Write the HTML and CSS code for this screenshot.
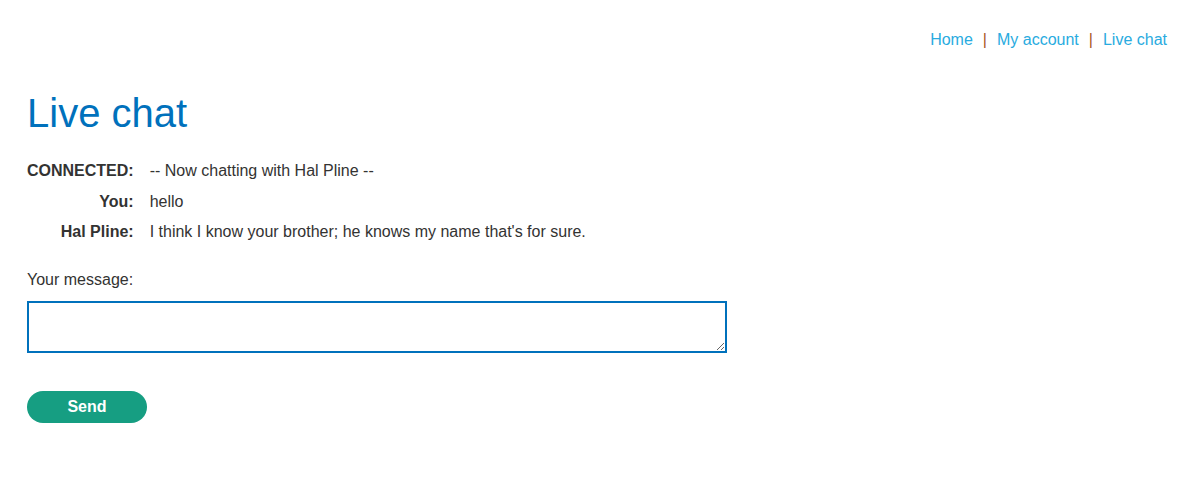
FILE: index.html
```html
<!DOCTYPE html>
<html>
<head>
<meta charset="utf-8">
<link rel="stylesheet" href="styles.css">
</head>
<body>
<div class="page">
  <header class="top-links">
    <a href="#">Home</a><span class="sep">|</span><a href="#">My account</a><span class="sep">|</span><a href="#">Live chat</a>
  </header>
  <h1 class="title">Live chat</h1>
  <table class="chat">
    <tr><th>CONNECTED:</th><td>-- Now chatting with Hal Pline --</td></tr>
    <tr><th>You:</th><td>hello</td></tr>
    <tr><th>Hal Pline:</th><td>I think I know your brother; he knows my name that's for sure.</td></tr>
  </table>
  <form class="chat-form">
    <label class="msg-label">Your message:</label>
    <textarea class="msg-input"></textarea>
    <button type="button" class="send">Send</button>
  </form>
</div>
</body>
</html>
```
FILE: styles.css
```css
html, body {
  margin: 0;
  padding: 0;
  background: #fff;
}
body {
  font-family: "Liberation Sans", Arial, sans-serif;
  font-size: 16px;
  color: #333332;
}
.page {
  padding: 30px 27px 0 27px;
}
.top-links {
  display: flex;
  justify-content: flex-end;
  align-items: center;
  line-height: 20px;
}
.top-links a {
  color: #29abe0;
  text-decoration: none;
}
.sep {
  color: #a8541f;
  margin: 0 10px 0 10px;
}
.title {
  margin: 38px 0 0 0;
  font-size: 40px;
  font-weight: normal;
  color: #0071bc;
  line-height: 50px;
}
.chat {
  border-collapse: collapse;
  margin-top: 18px;
  margin-left: -2px;
}
.chat th {
  text-align: right;
  font-weight: bold;
  padding: 5px 16px 5px 2px;
  line-height: 20.5px;
  white-space: nowrap;
}
.chat td {
  padding: 5px 0;
  line-height: 20.5px;
}
.chat-form {
  display: flex;
  flex-direction: column;
  align-items: flex-start;
  margin-top: 22px;
}
.msg-label {
  line-height: 20px;
}
.msg-input {
  margin-top: 11px;
  box-sizing: border-box;
  width: 700px;
  height: 52px;
  border: 2px solid #0071bc;
  border-radius: 0;
  outline: none;
  font-family: inherit;
  font-size: 16px;
  padding: 4px;
}
.send {
  margin-top: 38px;
  width: 120px;
  height: 32px;
  border: none;
  border-radius: 16px;
  background: #169e82;
  color: #fff;
  font-family: inherit;
  font-weight: bold;
  font-size: 16px;
  padding: 0;
  cursor: pointer;
}
```
